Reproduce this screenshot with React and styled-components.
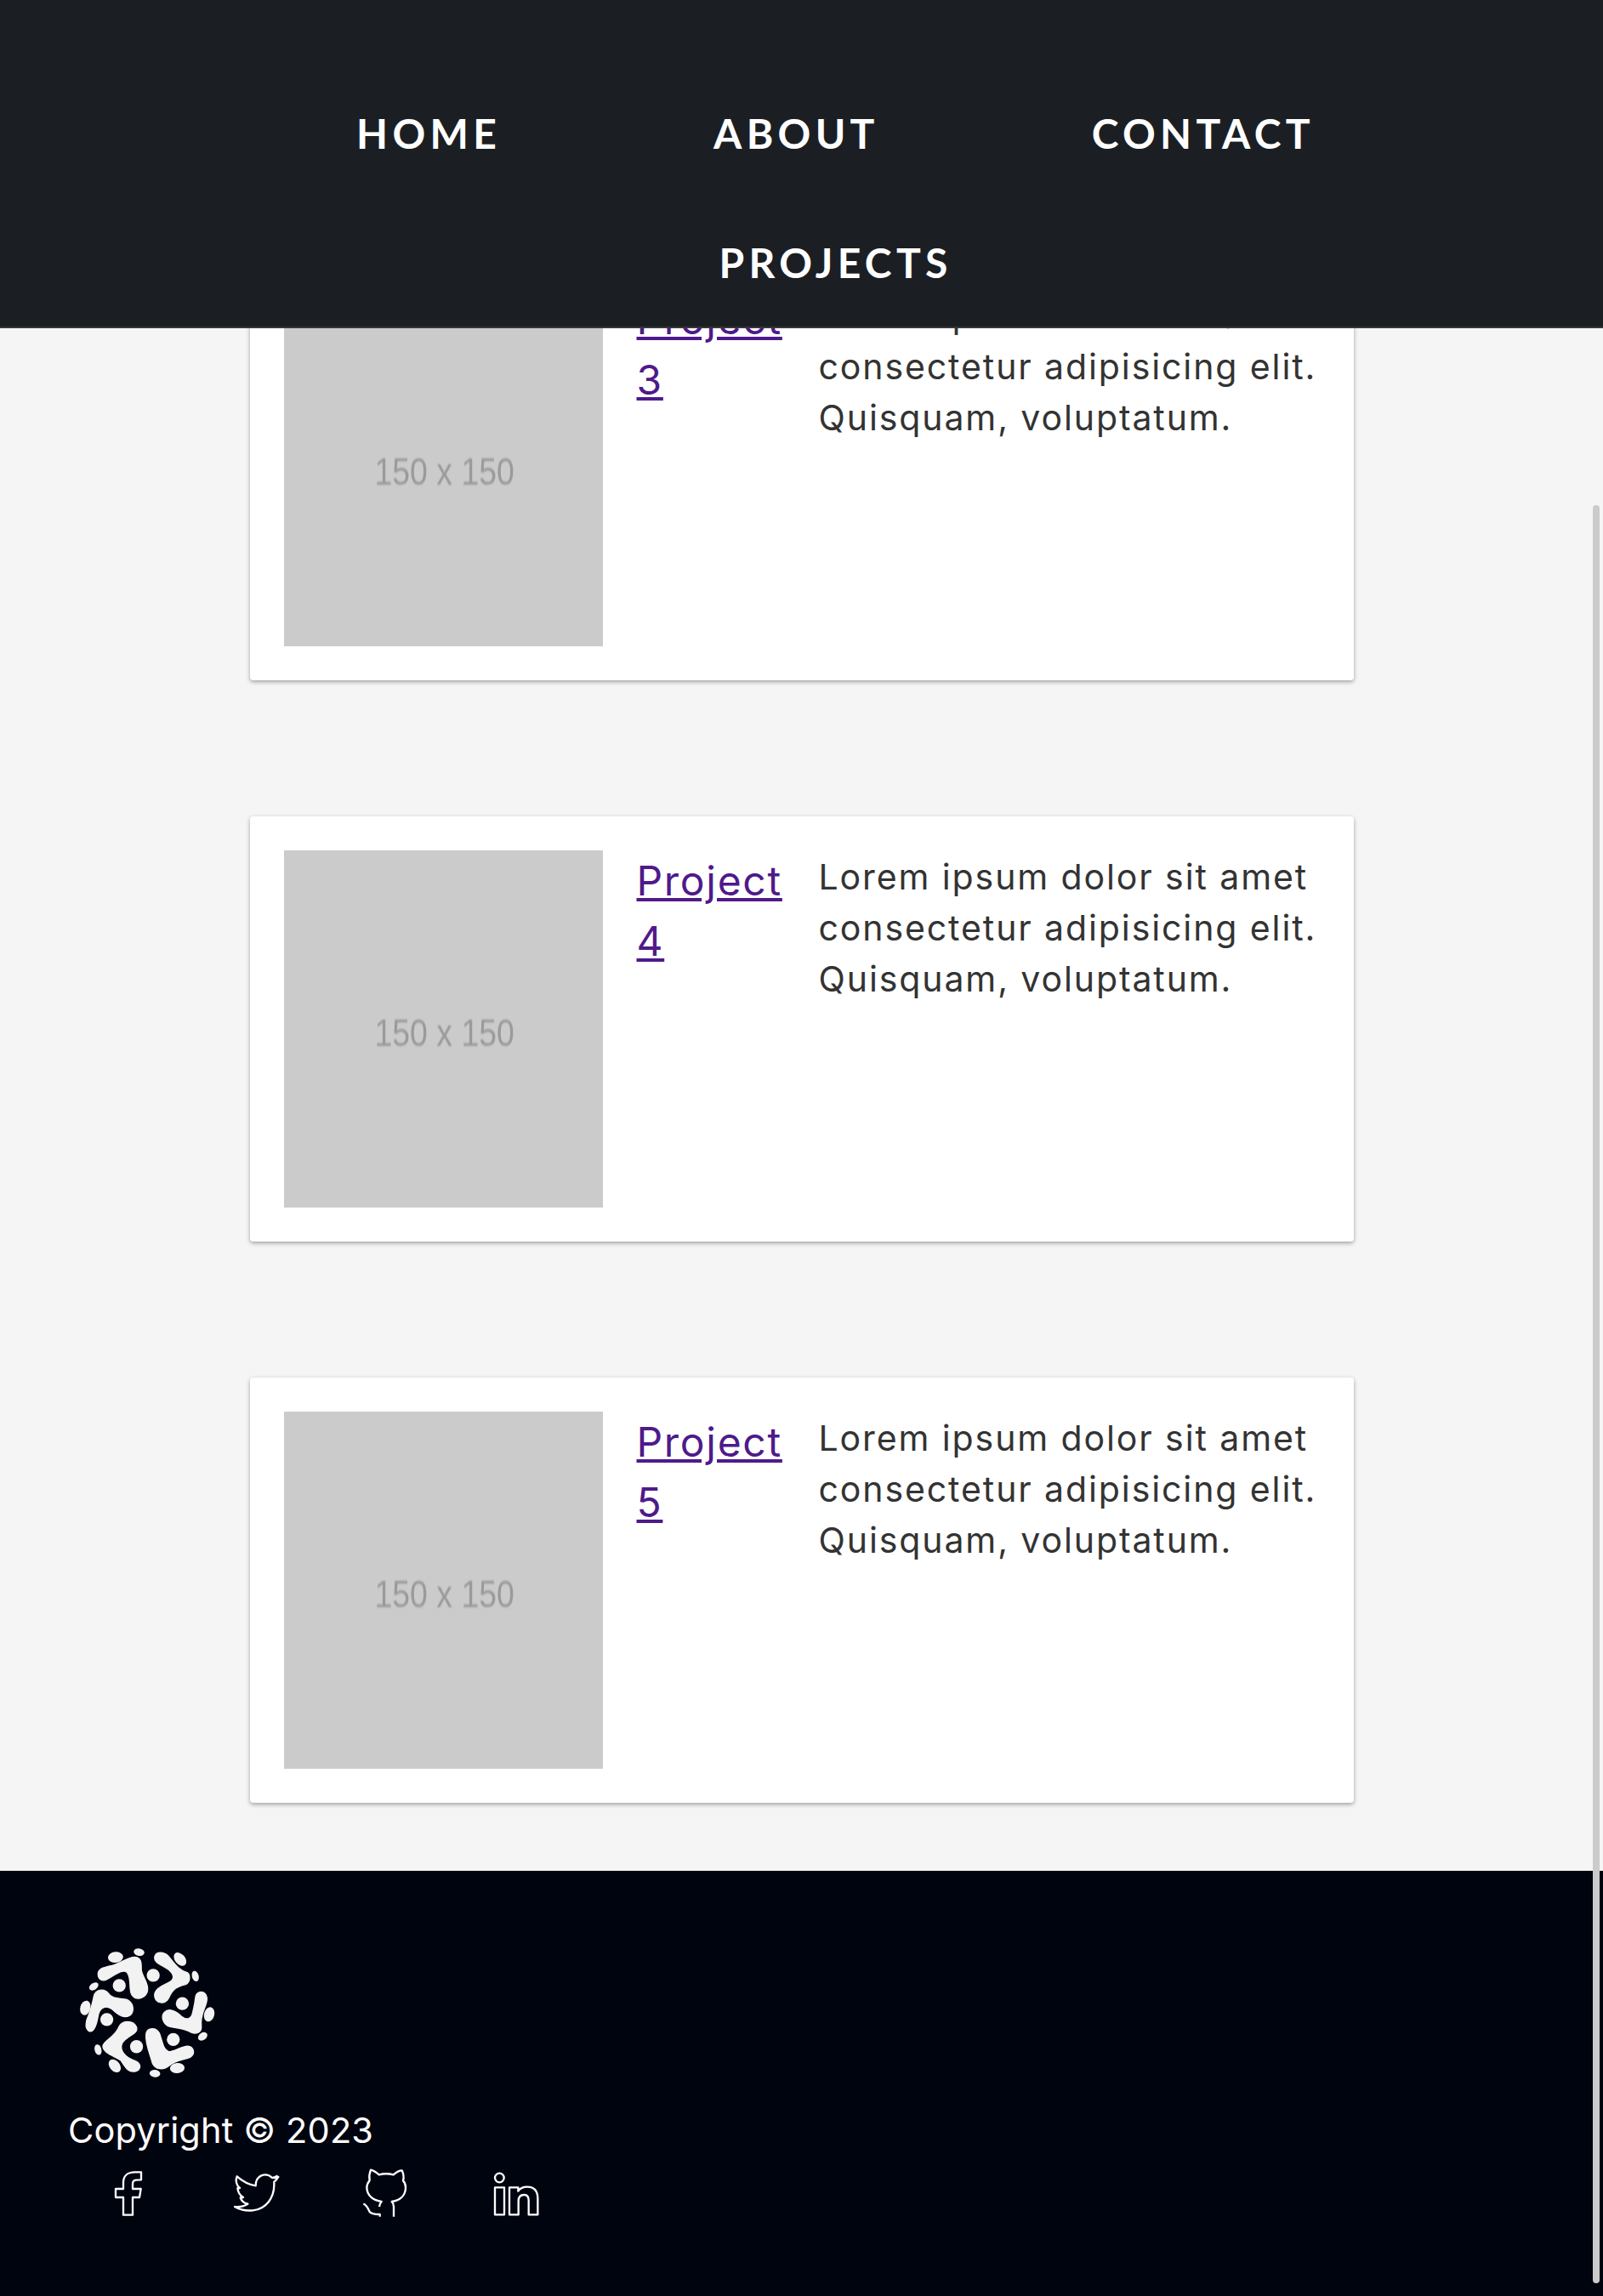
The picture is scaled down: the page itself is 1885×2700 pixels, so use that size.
import React from 'react'
import styled, { createGlobalStyle } from 'styled-components'

const GlobalStyle = createGlobalStyle`
  html, body {
    margin: 0;
    height: 2700px;
    overflow: hidden;
    background: #f5f5f5;
    font-family: Inter, "Noto Sans", sans-serif;
    color: #333;
  }
`

const Header = styled.header`
  position: fixed;
  top: 0;
  left: 0;
  right: 0;
  z-index: 10;
  box-sizing: border-box;
  height: 386px;
  padding: 121px 0 0 80px;
  background: #1b1f24;
  border-bottom: 2px solid #363636;
`

const NavList = styled.nav`
  display: flex;
  flex-wrap: wrap;
  justify-content: center;
  gap: 80px 250px;
  width: 1340px;
  margin: 0 auto;
`

const NavLink = styled.a`
  font-family: Lato, sans-serif;
  font-weight: 700;
  font-size: 48px;
  line-height: 72px;
  letter-spacing: 5.3px;
  color: #fff;
`

const Scrollbar = styled.div`
  position: fixed;
  top: 594px;
  right: 4px;
  width: 8px;
  height: 2091px;
  border-radius: 4px;
  background: #cbcbcb;
  z-index: 20;
`

const Main = styled.main`
  display: flex;
  flex-direction: column;
  align-items: center;
  gap: 160px;
  padding: 300px 0 80px;
`

const Card = styled.article`
  box-sizing: border-box;
  display: grid;
  grid-template-columns: 375px 172px 1fr;
  gap: 40px;
  width: 1298px;
  height: 500px;
  padding: 40px;
  background: #fff;
  border-radius: 4px;
  box-shadow: 0 2px 5px rgba(0, 0, 0, 0.35);
`

const Placeholder = styled.div`
  display: flex;
  align-items: center;
  justify-content: center;
  padding: 10px 0 0 3px;
  background: #cbcbcb;
  color: #9a9a9a;
  font-family: "Liberation Sans", sans-serif;
  font-size: 44px;
  overflow: hidden;
`

const PlaceholderText = styled.span`
  white-space: nowrap;
  transform: scaleX(0.85);
  filter: blur(0.8px);
`

const ProjectTitle = styled.div`
  font-size: 48px;
  line-height: 71px;
  letter-spacing: 1.7px;
`

const ProjectLink = styled.a`
  color: #4f1a8a;
  text-decoration: underline;
`

const Blurb = styled.p`
  margin: 0;
  padding: 1px 0 0 2px;
  font-size: 41px;
  line-height: 60px;
  letter-spacing: 1.9px;
  color: #333;
`

const Footer = styled.footer`
  box-sizing: border-box;
  display: flex;
  flex-direction: column;
  align-items: flex-start;
  height: 500px;
  padding: 88px 0 0 80px;
  background: #00040f;
  color: #fff;
`

const Logo = styled.svg`
  display: block;
  width: 167px;
  height: 158px;
  margin-left: 10px;
  fill: #f2f2f2;
`

const Blob = styled.path`
  stroke: #f2f2f2;
  stroke-width: 4;
  stroke-linejoin: round;
`

const Copyright = styled.div`
  margin-top: 29px;
  font-size: 41.5px;
  line-height: 60px;
  letter-spacing: 0.15px;
`

const Socials = styled.div`
  display: flex;
  gap: 86px;
  margin: 10px 0 0 44px;
`

const SocialIcon = styled.svg`
  display: block;
  width: 65px;
  height: 70px;
  fill: none;
  stroke: #fff;
  stroke-width: 7;
  stroke-linejoin: round;
`

const dots = [[360, 190], [240, 226], [463, 290], [196, 346], [431, 417], [301, 442]]

const pods = [
  [227, 126, 27, 19, -5], [310, 108, 19, 13, 10], [455, 133, 27, 18, 50], [509, 193, 12, 19, -15],
  [558, 328, 18, 26, 15], [535, 406, 18, 13, -35], [445, 518, 26, 18, -5], [366, 537, 19, 13, 5],
  [224, 510, 26, 18, 50], [165, 453, 12, 19, -15], [120, 305, 18, 26, 15], [150, 229, 18, 12, -35],
]

const blobs = [
  'M165 185C165 165 190 160 215 155C245 148 270 125 295 125C320 127 318 150 318 170C320 195 345 215 340 245C335 270 300 282 285 260C272 240 285 205 268 180C250 165 225 190 195 205C180 212 165 205 165 185Z',
  'M365 125C368 105 395 105 412 120C430 140 445 170 480 180C492 188 492 214 475 222C445 230 430 235 415 270C400 295 370 290 365 265C362 240 385 230 415 215C435 205 435 190 420 175C400 155 362 150 365 125Z',
  'M510 265C512 245 545 240 550 270C552 300 525 320 530 370C532 388 518 400 495 392C470 378 450 378 420 372C395 365 385 335 400 320C415 305 440 315 460 335C480 350 495 345 500 320C505 300 508 285 510 265Z',
  'M335 395C340 375 370 372 382 395C392 420 395 455 415 460C435 460 460 440 482 440C505 442 510 470 490 480C465 490 440 490 415 510C397 524 368 526 357 500C350 470 330 430 335 395Z',
  'M240 370C250 350 290 345 302 375C305 400 270 400 250 430C240 455 260 480 295 492C318 500 320 525 295 530C270 533 262 515 245 490C225 476 182 465 182 440C185 420 225 410 240 370Z',
  'M150 265C155 240 185 235 200 252C215 275 240 270 265 275C290 285 295 315 280 330C260 345 235 330 215 310C195 295 170 300 165 335C160 365 150 392 135 388C118 380 120 355 130 335C140 310 145 290 150 265Z',
]

const projects = [3, 4, 5]

const socials = [
  {
    name: 'facebook',
    box: '-3 0 195 210',
    shapes: <path d="M123 28V55L105 56C96 57 93 62 93 70V87H122L117 117H93V179H60V117H33V87H60V65C60 42 75 28 100 28Z" />,
  },
  {
    name: 'twitter',
    box: '15 0 195 210',
    shapes: <path d="M167 42C160 47 156 48 150 48C140 38 125 35 112 40C98 46 92 60 92 76C68 72 45 60 26 43C20 58 24 75 36 84C32 86 30 86 28 85C30 100 36 110 48 117C44 119 41 119 38 118C42 130 50 137 64 140C52 148 36 152 18 150C38 162 60 165 82 163C130 158 156 118 157 75C157 70 157 66 157 62C163 58 168 52 172 45C166 48 162 49 158 49C162 47 165 45 167 42Z" />,
  },
  {
    name: 'github',
    box: '18 0 195 210',
    shapes: <path d="M129 185V150C129 142 127 137 122 132C150 128 171 112 171 82C171 72 168 64 162 58C165 48 164 35 158 22C148 22 138 28 128 37C112 33 92 33 77 37C66 28 58 22 48 20C43 32 42 46 44 57C38 65 34 72 34 82C34 112 58 128 86 132C81 137 79 142 78 150M22 140C34 144 38 155 44 168C50 176 62 177 80 177V185" />,
  },
  {
    name: 'linkedin',
    box: '6 0 195 210',
    shapes: (
      <>
        <circle cx="37" cy="48" r="16" />
        <path d="M21 82H54V178H21Z" />
        <path d="M72 82H103V95C110 85 125 80 135 80C160 80 172 95 172 122V178H140V128C140 115 135 108 124 108C112 108 104 116 104 130V178H72Z" />
      </>
    ),
  },
]

function App() {
  return (
    <>
      <GlobalStyle />
      <Header>
        <NavList>
          <NavLink>HOME</NavLink>
          <NavLink>ABOUT</NavLink>
          <NavLink>CONTACT</NavLink>
          <NavLink>PROJECTS</NavLink>
        </NavList>
      </Header>
      <Scrollbar />
      <Main>
        {projects.map((n) => (
          <Card key={n}>
            <Placeholder>
              <PlaceholderText>150 x 150</PlaceholderText>
            </Placeholder>
            <ProjectTitle>
              <ProjectLink href="#">Project {n}</ProjectLink>
            </ProjectTitle>
            <Blurb>Lorem ipsum dolor sit amet consectetur adipisicing elit. Quisquam, voluptatum.</Blurb>
          </Card>
        ))}
      </Main>
      <Footer>
        <Logo viewBox="90 85 500 475">
          {blobs.map((d) => <Blob key={d} d={d} />)}
          {dots.map(([cx, cy]) => <circle key={cx} cx={cx} cy={cy} r="23" />)}
          {pods.map(([cx, cy, rx, ry, rot]) => (
            <ellipse key={cx + '-' + cy} cx={cx} cy={cy} rx={rx} ry={ry} transform={`rotate(${rot} ${cx} ${cy})`} />
          ))}
        </Logo>
        <Copyright>Copyright © 2023</Copyright>
        <Socials>
          {socials.map((s) => <SocialIcon key={s.name} viewBox={s.box}>{s.shapes}</SocialIcon>)}
        </Socials>
      </Footer>
    </>
  )
}

export default App
